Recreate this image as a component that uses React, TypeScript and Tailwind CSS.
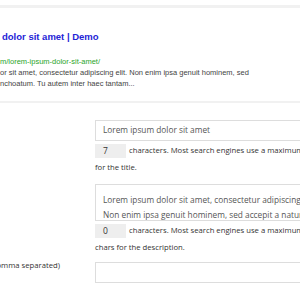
import React from "react";

const sans = "font-['Liberation_Sans',Arial,sans-serif]";
const form = "font-['Open_Sans',sans-serif]";

const Counter = ({ value, text, after }: { value: string; text: string; after: string }) => (
  <div className="mt-[3px]">
    <div className="flex items-center gap-[3px] whitespace-nowrap">
      <div className="w-[31px] shrink-0 h-[14px] bg-[#eeeeee] flex items-center pl-[8px] text-[8.5px] text-[#333]">
        {value}
      </div>
      <span className="text-[7.7px] text-[#333]">{text}</span>
    </div>
    <p className="mt-[1px] text-[7.7px] leading-[16px] text-[#333] whitespace-nowrap">{after}</p>
  </div>
);

export default function App() {
  return (
    <div className="w-[300px] h-[300px] overflow-hidden bg-white relative">
      <div className="h-[5px]" />
      <div className="h-[3px] bg-[#f1f1f1]" />

      {/* snippet preview */}
      <div className={`${sans} pt-[23px] whitespace-nowrap`}>
        <h3 className="text-[9.5px] leading-[12px] font-bold text-[#2424d6] pl-[2px]">
          dolor sit amet | Demo
        </h3>
        <p className="mt-[13px] text-[7.5px] leading-[11px] text-[#2aa52a]">
          m/lorem-ipsum-dolor-sit-amet/
        </p>
        <p className="text-[7.5px] leading-[11px] text-[#444]">
          or sit amet, consectetur adipiscing elit. Non enim ipsa genuit hominem, sed
        </p>
        <p className="text-[7.5px] leading-[11px] text-[#444]">
          nchoatum. Tu autem inter haec tantam...
        </p>
      </div>

      <div className="mt-[12px] h-[2px] bg-[#f1f1f1]" />

      {/* form */}
      <div className={`${form} pt-[17px]`}>
        <div className="flex">
          <div className="w-[95px] shrink-0" />
          <div className="flex-1 min-w-0">
            <div className="w-[230px] h-[21px] border border-[#dddddd] flex items-center px-[7px] text-[8.3px] text-[#555] whitespace-nowrap">
              Lorem ipsum dolor sit amet
            </div>
            <Counter
              value="7"
              text="characters. Most search engines use a maximum of 60"
              after="for the title."
            />

            <div className="mt-[9px] w-[230px] h-[37px] border border-[#dddddd] px-[7px] pt-[7px] text-[8.3px] leading-[15px] text-[#555] whitespace-nowrap overflow-hidden">
              <div>Lorem ipsum dolor sit amet, consectetur adipiscing elit.</div>
              <div>Non enim ipsa genuit hominem, sed accepit a natura</div>
            </div>
            <Counter
              value="0"
              text="characters. Most search engines use a maximum of 160"
              after="chars for the description."
            />
          </div>
        </div>

        <div className="flex mt-[7px]">
          <div className="w-[95px] shrink-0 flex justify-end items-start pr-[35px]">
            <span className="-mt-[1px] text-[7.7px] leading-[8px] text-[#333] whitespace-nowrap">
              Meta keywords (comma separated)
            </span>
          </div>
          <div className="flex-1 min-w-0">
            <div className="w-[230px] h-[21px] border border-[#dddddd]" />
          </div>
        </div>
      </div>
    </div>
  );
}
